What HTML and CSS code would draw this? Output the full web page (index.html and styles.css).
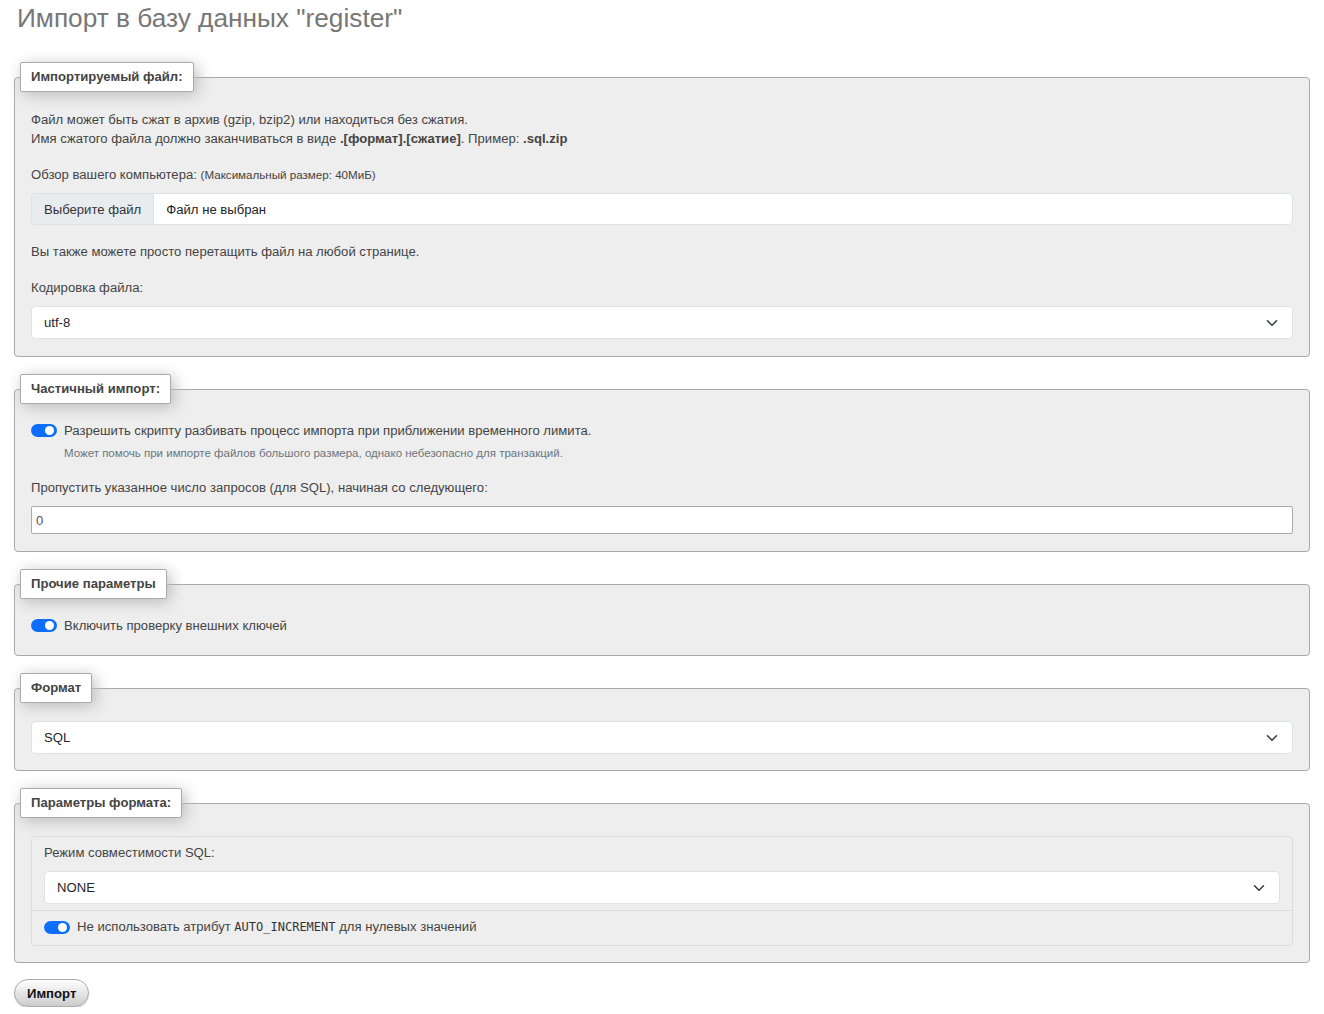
FILE: index.html
```html
<!DOCTYPE html>
<html lang="ru">
<head>
<meta charset="utf-8">
<title>Импорт</title>
<link rel="stylesheet" href="styles.css">
</head>
<body>
<h2 class="page-title">Импорт в базу данных "register"</h2>

<form class="import-form">
  <fieldset class="panel">
    <legend class="panel-legend">Импортируемый файл:</legend>
    <p class="text first">Файл может быть сжат в архив (gzip, bzip2) или находиться без сжатия.<br>Имя сжатого файла должно заканчиваться в виде <b>.[формат].[сжатие]</b>. Пример: <b>.sql.zip</b></p>
    <p class="text gap">Обзор вашего компьютера: <small class="small">(Максимальный размер: 40МиБ)</small></p>
    <div class="file-input">
      <span class="file-btn">Выберите файл</span>
      <span class="file-name">Файл не выбран</span>
    </div>
    <p class="text gap">Вы также можете просто перетащить файл на любой странице.</p>
    <p class="text gap">Кодировка файла:</p>
    <div class="select-box">
      <span>utf-8</span>
      <svg class="chevron" viewBox="0 0 16 16" width="16" height="12"><path d="M2 5l6 6 6-6" fill="none" stroke="#343a40" stroke-width="2" stroke-linecap="round" stroke-linejoin="round"/></svg>
    </div>
  </fieldset>

  <fieldset class="panel">
    <legend class="panel-legend">Частичный импорт:</legend>
    <div class="switch-row first">
      <span class="switch"><span class="knob"></span></span>
      <span>Разрешить скрипту разбивать процесс импорта при приближении временного лимита.</span>
    </div>
    <div class="form-text">Может помочь при импорте файлов большого размера, однако небезопасно для транзакций.</div>
    <p class="text gap">Пропустить указанное число запросов (для SQL), начиная со следующего:</p>
    <div class="text-input">0</div>
  </fieldset>

  <fieldset class="panel panel-loose">
    <legend class="panel-legend">Прочие параметры</legend>
    <div class="switch-row first">
      <span class="switch"><span class="knob"></span></span>
      <span>Включить проверку внешних ключей</span>
    </div>
  </fieldset>

  <fieldset class="panel panel-tight">
    <legend class="panel-legend">Формат</legend>
    <div class="select-box first">
      <span>SQL</span>
      <svg class="chevron" viewBox="0 0 16 16" width="16" height="12"><path d="M2 5l6 6 6-6" fill="none" stroke="#343a40" stroke-width="2" stroke-linecap="round" stroke-linejoin="round"/></svg>
    </div>
  </fieldset>

  <fieldset class="panel panel-tight">
    <legend class="panel-legend">Параметры формата:</legend>
    <div class="option-list">
      <div class="option-item option-top">
        <p class="text">Режим совместимости SQL:</p>
        <div class="select-box">
          <span>NONE</span>
          <svg class="chevron" viewBox="0 0 16 16" width="16" height="12"><path d="M2 5l6 6 6-6" fill="none" stroke="#343a40" stroke-width="2" stroke-linecap="round" stroke-linejoin="round"/></svg>
        </div>
      </div>
      <div class="option-item option-bottom">
        <div class="switch-row">
          <span class="switch"><span class="knob"></span></span>
          <span>Не использовать атрибут <code class="code">AUTO_INCREMENT</code> для нулевых значений</span>
        </div>
      </div>
    </div>
  </fieldset>

  <div class="actions">
    <button type="button" class="submit-btn">Импорт</button>
  </div>
</form>
</body>
</html>
```

FILE: styles.css
```css
html, body {
  margin: 0;
  padding: 0;
  background: #fff;
}
body {
  padding: 0 14px;
  font-family: "Liberation Sans", Arial, sans-serif;
  font-size: 13.12px;
  line-height: 19px;
  color: #444;
}
.page-title {
  margin: 0 0 28px;
  padding: 3px 0 0 3px;
  font-size: 26.24px;
  line-height: 31px;
  font-weight: normal;
  color: #777;
}
.import-form {
  margin: 0;
}
.panel {
  margin: 17px 0 0;
  padding: 0 16px 17px;
  min-width: 0;
  border: 1px solid #aaa;
  border-radius: 4px;
  background: #eee;
}
.import-form > .panel:first-child {
  margin-top: 0;
}
.panel-loose {
  padding-bottom: 20px;
}
.panel-tight {
  padding-bottom: 16px;
}
.panel-legend {
  margin-left: -11px;
  padding: 5px 10px;
  border: 1px solid #aaa;
  border-radius: 2px;
  background: #fff;
  font-weight: bold;
  line-height: 18px;
  color: #444;
  box-shadow: 3px 3px 15px #bbb;
}
.text {
  margin: 0;
}
.first {
  margin-top: 18px;
}
.gap {
  margin-top: 17px;
}
.small {
  font-size: 11.6px;
}
.file-input {
  margin-top: 9px;
  display: flex;
  height: 32px;
  box-sizing: border-box;
  border: 1px solid #dee2e6;
  border-radius: 4px;
  background: #fff;
  overflow: hidden;
  color: #212529;
}
.file-btn {
  display: flex;
  align-items: center;
  padding: 0 12px;
  background: #e9ecef;
  border-right: 1px solid #dee2e6;
  color: #333;
}
.file-name {
  display: flex;
  align-items: center;
  padding: 0 12px;
}
.select-box {
  margin-top: 9px;
  display: flex;
  align-items: center;
  justify-content: space-between;
  height: 33px;
  box-sizing: border-box;
  padding: 0 12px;
  border: 1px solid #dee2e6;
  border-radius: 4px;
  background: #fff;
  color: #212529;
}
.select-box.first {
  margin-top: 18px;
}
.chevron {
  display: block;
  flex: none;
}
.switch-row {
  display: flex;
  align-items: center;
}
.switch-row.first {
  margin-top: 17px;
}
.switch {
  position: relative;
  flex: none;
  width: 26px;
  height: 13px;
  margin-right: 7px;
  border-radius: 7px;
  background: #0d6efd;
}
.knob {
  position: absolute;
  top: 2px;
  right: 3px;
  width: 9px;
  height: 9px;
  border-radius: 50%;
  background: #fff;
}
.form-text {
  margin-top: 5px;
  padding-left: 33px;
  font-size: 11.5px;
  line-height: 16px;
  color: #6c757d;
}
.text-input {
  margin-top: 9px;
  height: 28px;
  box-sizing: border-box;
  padding: 0 4px;
  display: flex;
  align-items: center;
  border: 1px solid #aaa;
  border-radius: 2px;
  background: #fff;
  color: #555;
}
.option-list {
  margin-top: 18px;
  border: 1px solid #dcdcdc;
  border-radius: 4px;
}
.option-item {
  padding: 6px 12px;
}
.option-top {
  padding-bottom: 6px;
}
.option-bottom {
  border-top: 1px solid #dcdcdc;
  padding-bottom: 8px;
}
.code {
  font-family: "DejaVu Sans Mono", "Liberation Mono", monospace;
  font-size: 12px;
  color: #333;
}
.actions {
  margin-top: 16px;
}
.submit-btn {
  height: 28px;
  padding: 0 12px;
  border: 1px solid #aaa;
  border-radius: 14px;
  background: linear-gradient(#fff, #ccc);
  font-family: "Liberation Sans", Arial, sans-serif;
  font-size: 13.12px;
  font-weight: bold;
  color: #111;
  box-shadow: 0 1px 1px #ccc;
}
```
